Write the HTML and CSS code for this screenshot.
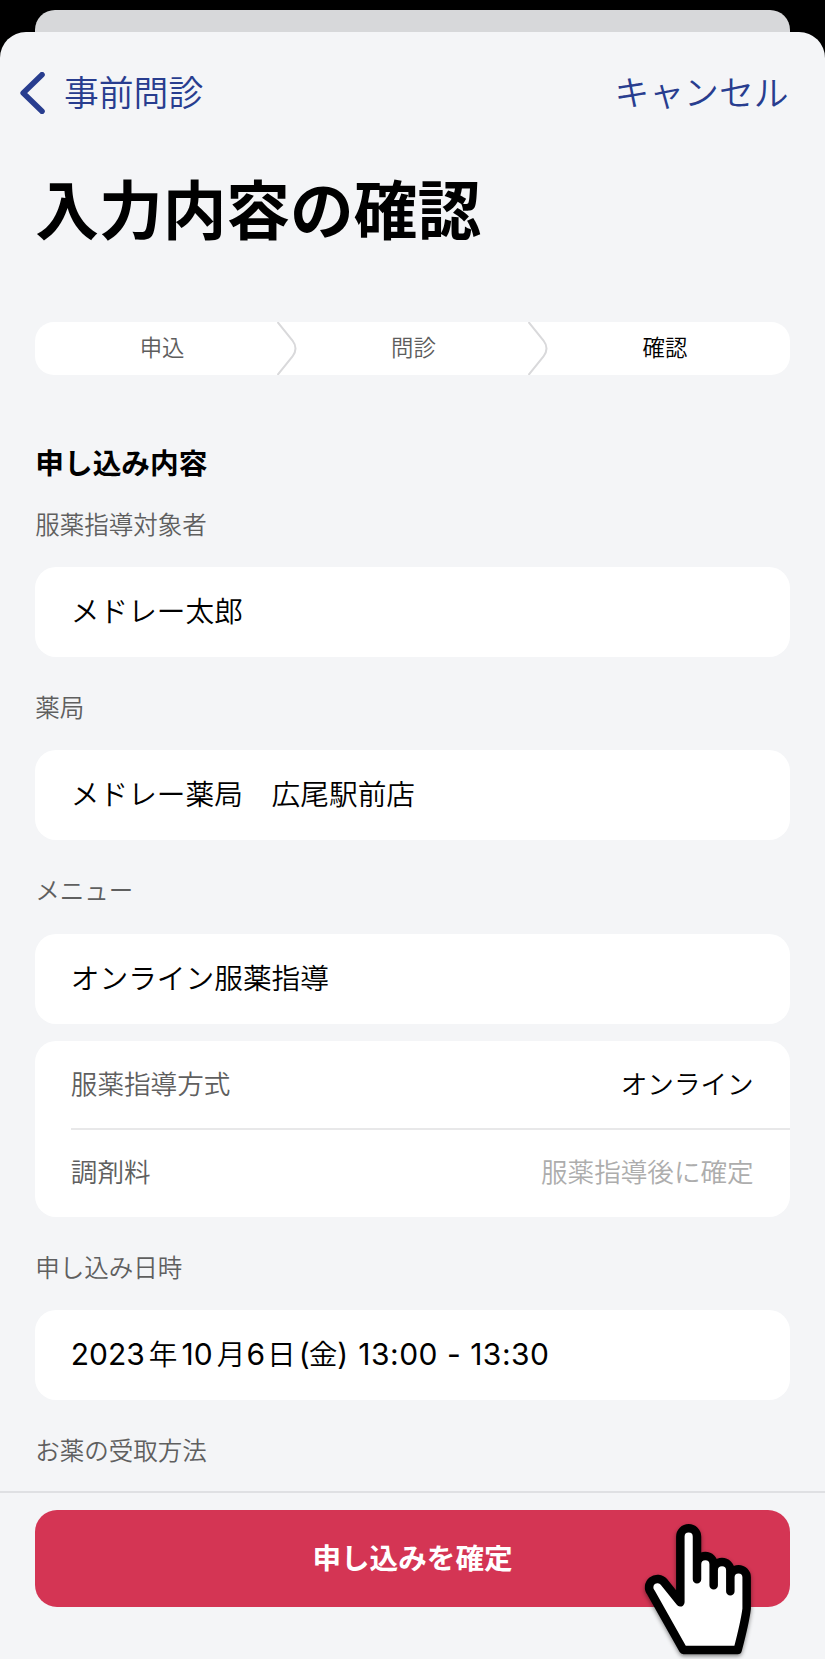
FILE: index.html
```html
<!DOCTYPE html>
<html lang="ja">
<head>
  <meta charset="UTF-8">
  <meta name="viewport" content="width=device-width, initial-scale=1">
  <title>入力内容の確認</title>
  <link rel="stylesheet" href="styles.css">
</head>
<body>
  <div class="screen">
    <div class="back-sheet"></div>
    <div class="sheet">
      <header class="nav">
        <a class="nav-back">
          <svg class="chevron" width="25" height="42" viewBox="0 0 25 42">
            <path d="M22 2.7 L3.2 21 L22 39.3" fill="none" stroke="#283d8f" stroke-width="5.6" stroke-linecap="round" stroke-linejoin="round"/>
          </svg>
          <span>事前問診</span>
        </a>
        <a class="nav-cancel">キャンセル</a>
      </header>

      <main class="content">
        <h1>入力内容の確認</h1>

        <div class="steps">
          <div class="step">申込</div>
          <svg class="step-arrow" width="20" height="53" viewBox="0 0 20 53"><path d="M0.5 0 L15.5 18.5 Q21.5 26.5 15.5 34.5 L0.5 53"/></svg>
          <div class="step">問診</div>
          <svg class="step-arrow" width="20" height="53" viewBox="0 0 20 53"><path d="M0.5 0 L15.5 18.5 Q21.5 26.5 15.5 34.5 L0.5 53"/></svg>
          <div class="step current">確認</div>
        </div>

        <h2>申し込み内容</h2>

        <p class="label first">服薬指導対象者</p>
        <div class="card">メドレー太郎</div>

        <p class="label">薬局</p>
        <div class="card">メドレー薬局　広尾駅前店</div>

        <p class="label">メニュー</p>
        <div class="card">オンライン服薬指導</div>
        <div class="card-list">
          <div class="row">
            <span class="row-name">服薬指導方式</span>
            <span class="row-value">オンライン</span>
          </div>
          <div class="row">
            <span class="row-name">調剤料</span>
            <span class="row-value pending">服薬指導後に確定</span>
          </div>
        </div>

        <p class="label">申し込み日時</p>
        <div class="card date"><span>2023</span><span class="kanji">年</span><span>10</span><span class="kanji month">月</span><span>6</span><span class="kanji day">日</span><span>(</span><span class="kanji weekday">金</span><span>)</span><span class="time">13:00 - 13:30</span></div>

        <p class="label">お薬の受取方法</p>
      </main>

      <footer class="footer">
        <button class="submit">申し込みを確定</button>
        <svg class="hand" width="115" height="140" viewBox="130 125 345 420">
          <path d="M251 509 L154 337 A24.5 24.5 0 0 1 193 305 L242 366 L242 169 A25 25 0 0 1 292 169 L292 297 L292 252 A25 25 0 0 1 342 252 L342 315 L342 270 A25 25 0 0 1 392 270 L392 333 L392 291 A24.5 24.5 0 0 1 441 291 L441 385 Q436 425 414 509 Z" fill="#fff" stroke="#000" stroke-width="25.5" stroke-linejoin="round"/>
        </svg>
      </footer>
    </div>
  </div>
</body>
</html>
```

FILE: styles.css
```css
* {
  box-sizing: border-box;
}
body {
  margin: 0;
  background: #fff;
  color: #000;
  font-family: "Noto Sans CJK JP", sans-serif;
  font-weight: 350;
}
.screen {
  height: 1659px;
  padding-top: 9.5px;
  background: #000;
}
.back-sheet {
  height: 22px;
  margin: 0 35.3px;
  background: #d7d8da;
  border-radius: 20px 20px 0 0;
}
.sheet {
  height: 1627.5px;
  background: #f4f5f7;
  border-radius: 26px 26px 0 0;
  display: flex;
  flex-direction: column;
}
.nav {
  display: flex;
  flex-shrink: 0;
  justify-content: space-between;
  align-items: center;
  height: 123px;
  padding: 0 36.5px 0 20px;
  color: #283d8f;
  font-size: 34.8px;
  line-height: 50px;
}
.nav-back {
  display: flex;
  align-items: center;
  gap: 19px;
}
.nav-back span,
.nav-cancel {
  margin-top: -5px;
}
.content {
  flex: 1;
  min-height: 0;
  padding: 0 35.3px;
  overflow: hidden;
}
h1 {
  margin: 11px 0 0;
  font-size: 63.7px;
  font-weight: 700;
  line-height: 80px;
}
.steps {
  display: flex;
  height: 53px;
  margin-top: 76.5px;
  background: #fff;
  border-radius: 19px;
}
.step {
  flex: 1;
  padding-left: 2px;
  font-size: 22.4px;
  line-height: 49px;
  text-align: center;
  color: #5d5d5d;
}
.step.current {
  color: #000;
}
.step-arrow {
  margin: 0 -10px;
}
.step-arrow path {
  fill: none;
  stroke: #d9d9db;
  stroke-width: 2;
}
h2 {
  margin: 66.5px 0 0;
  font-size: 28.7px;
  font-weight: 700;
  line-height: 40px;
}
.label {
  margin: 32px 0 25.4px;
  color: #5f5f5f;
  font-size: 24.5px;
  line-height: 36px;
}
.label.first {
  margin-top: 24px;
}
.card {
  height: 90px;
  padding: 0 35.5px;
  background: #fff;
  border-radius: 21px;
  font-size: 28.7px;
  line-height: 86px;
}
.card-list {
  height: 175.5px;
  margin-top: 17.5px;
  padding-left: 35.5px;
  background: #fff;
  border-radius: 21px;
}
.row {
  display: flex;
  justify-content: space-between;
  height: 87px;
  padding-right: 36px;
  font-size: 26.6px;
  line-height: 84px;
}
.row + .row {
  height: 88.5px;
  border-top: 2px solid #e8e8e9;
  line-height: 82px;
}
.row-name {
  color: #5f5f5f;
}
.row-value.pending {
  color: #adadad;
}
.date {
  display: flex;
  font-family: Inter, "Noto Sans CJK JP", sans-serif;
  font-size: 30px;
  font-weight: 400;
  line-height: 89px;
}
.date .kanji {
  margin: 0 4px;
  font-family: "Noto Sans CJK JP", sans-serif;
  font-size: 28.7px;
  font-weight: 350;
  line-height: 86px;
}
.date .month {
  margin-right: 1px;
}
.date .day {
  margin: 0 3px 0 2px;
}
.date .weekday {
  margin: 0 0 0 -1px;
}
.date .time {
  margin-left: 10px;
  letter-spacing: 0.5px;
}
.footer {
  position: relative;
  flex-shrink: 0;
  height: 168px;
  padding: 17px 35.3px 0;
  border-top: 2px solid #dfe0e3;
}
.submit {
  display: block;
  width: 100%;
  height: 97px;
  padding: 0 0 4px;
  border: 0;
  border-radius: 22px;
  background: #d43554;
  color: #fff;
  font-family: inherit;
  font-size: 28.6px;
  font-weight: 700;
}
/* pointer sits over the button */
.hand {
  position: absolute;
  left: 643.3px;
  top: 28.7px;
  filter: drop-shadow(0 2px 2px rgba(0, 0, 0, 0.45));
}
```
